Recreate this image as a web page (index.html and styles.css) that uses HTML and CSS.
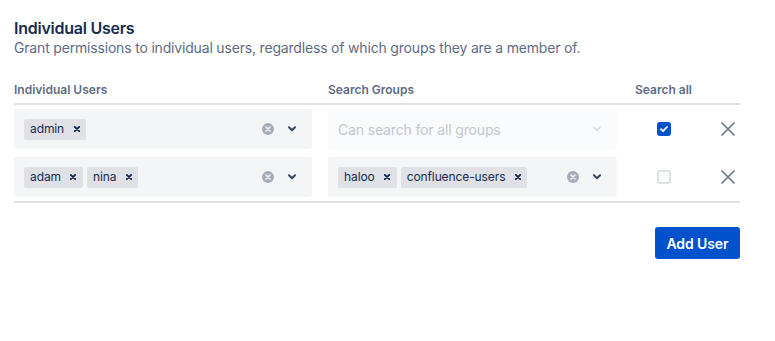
FILE: index.html
```html
<!DOCTYPE html>
<html lang="en">
<head>
<meta charset="utf-8">
<title>Individual Users</title>
<link rel="stylesheet" href="styles.css">
</head>
<body>
<section class="section">
  <h2 class="title">Individual Users</h2>
  <p class="desc">Grant permissions to individual users, regardless of which groups they are a member of.</p>

  <div class="table">
    <div class="row head">
      <div class="th">Individual Users</div>
      <div class="th">Search Groups</div>
      <div class="th">Search all</div>
      <div class="th"></div>
    </div>

    <div class="row body">
      <div class="cell c1">
        <div class="select">
          <div class="values">
            <span class="tag"><span class="tag-label">admin</span><span class="tag-remove"><svg viewBox="0 0 6 6" width="6" height="6"><path d="M0.8 0.8 L5.2 5.2 M5.2 0.8 L0.8 5.2" stroke="#091E42" stroke-width="1.7" stroke-linecap="round"/></svg></span></span>
          </div>
          <div class="indicators">
            <span class="ind"><svg viewBox="0 0 12 12" width="12" height="12"><circle cx="6" cy="6" r="6" fill="#A5ADBA"/><path d="M4 4 L8 8 M8 4 L4 8" stroke="#F4F5F7" stroke-width="1.6" stroke-linecap="round"/></svg></span>
            <span class="ind"><svg viewBox="0 0 10 6" width="10" height="6"><path d="M2 1.3 L5 4.3 L8 1.3" fill="none" stroke="#344563" stroke-width="2" stroke-linecap="round" stroke-linejoin="round"/></svg></span>
          </div>
        </div>
      </div>
      <div class="cell c2">
        <div class="select disabled">
          <div class="values">
            <span class="placeholder">Can search for all groups</span>
          </div>
          <div class="indicators">
            <span class="ind"><svg viewBox="0 0 10 6" width="10" height="6"><path d="M2 1.3 L5 4.3 L8 1.3" fill="none" stroke="#DFE1E6" stroke-width="2" stroke-linecap="round" stroke-linejoin="round"/></svg></span>
          </div>
        </div>
      </div>
      <div class="cell c3">
        <span class="checkbox checked"><svg viewBox="0 0 14 14" width="14" height="14"><path d="M4 7.2 L6.1 9.2 L10 5" fill="none" stroke="#fff" stroke-width="1.8" stroke-linecap="round" stroke-linejoin="round"/></svg></span>
      </div>
      <div class="cell c4">
        <button class="remove" type="button" aria-label="Remove"><svg viewBox="0 0 14 14" width="14" height="14"><path d="M1 1 L13 13 M13 1 L1 13" stroke="#6B778C" stroke-width="1.7" stroke-linecap="round"/></svg></button>
      </div>
    </div>

    <div class="row body last">
      <div class="cell c1">
        <div class="select">
          <div class="values">
            <span class="tag"><span class="tag-label">adam</span><span class="tag-remove"><svg viewBox="0 0 6 6" width="6" height="6"><path d="M0.8 0.8 L5.2 5.2 M5.2 0.8 L0.8 5.2" stroke="#091E42" stroke-width="1.7" stroke-linecap="round"/></svg></span></span>
            <span class="tag"><span class="tag-label">nina</span><span class="tag-remove"><svg viewBox="0 0 6 6" width="6" height="6"><path d="M0.8 0.8 L5.2 5.2 M5.2 0.8 L0.8 5.2" stroke="#091E42" stroke-width="1.7" stroke-linecap="round"/></svg></span></span>
          </div>
          <div class="indicators">
            <span class="ind"><svg viewBox="0 0 12 12" width="12" height="12"><circle cx="6" cy="6" r="6" fill="#A5ADBA"/><path d="M4 4 L8 8 M8 4 L4 8" stroke="#F4F5F7" stroke-width="1.6" stroke-linecap="round"/></svg></span>
            <span class="ind"><svg viewBox="0 0 10 6" width="10" height="6"><path d="M2 1.3 L5 4.3 L8 1.3" fill="none" stroke="#344563" stroke-width="2" stroke-linecap="round" stroke-linejoin="round"/></svg></span>
          </div>
        </div>
      </div>
      <div class="cell c2">
        <div class="select">
          <div class="values">
            <span class="tag"><span class="tag-label">haloo</span><span class="tag-remove"><svg viewBox="0 0 6 6" width="6" height="6"><path d="M0.8 0.8 L5.2 5.2 M5.2 0.8 L0.8 5.2" stroke="#091E42" stroke-width="1.7" stroke-linecap="round"/></svg></span></span>
            <span class="tag"><span class="tag-label">confluence-users</span><span class="tag-remove"><svg viewBox="0 0 6 6" width="6" height="6"><path d="M0.8 0.8 L5.2 5.2 M5.2 0.8 L0.8 5.2" stroke="#091E42" stroke-width="1.7" stroke-linecap="round"/></svg></span></span>
          </div>
          <div class="indicators">
            <span class="ind"><svg viewBox="0 0 12 12" width="12" height="12"><circle cx="6" cy="6" r="6" fill="#A5ADBA"/><path d="M4 4 L8 8 M8 4 L4 8" stroke="#F4F5F7" stroke-width="1.6" stroke-linecap="round"/></svg></span>
            <span class="ind"><svg viewBox="0 0 10 6" width="10" height="6"><path d="M2 1.3 L5 4.3 L8 1.3" fill="none" stroke="#344563" stroke-width="2" stroke-linecap="round" stroke-linejoin="round"/></svg></span>
          </div>
        </div>
      </div>
      <div class="cell c3">
        <span class="checkbox"></span>
      </div>
      <div class="cell c4">
        <button class="remove" type="button" aria-label="Remove"><svg viewBox="0 0 14 14" width="14" height="14"><path d="M1 1 L13 13 M13 1 L1 13" stroke="#6B778C" stroke-width="1.7" stroke-linecap="round"/></svg></button>
      </div>
    </div>
  </div>

  <div class="actions">
    <button class="btn-primary" type="button">Add User</button>
  </div>
</section>
</body>
</html>
```

FILE: styles.css
```css
* { box-sizing: border-box; }

html, body {
  margin: 0;
  background: #fff;
}

body {
  font-family: Inter, "Noto Sans", sans-serif;
  color: #172B4D;
}

.section {
  width: 754px;
  padding: 18px 14px 0;
}

.title {
  margin: 0;
  font-size: 16px;
  line-height: 20px;
  font-weight: 600;
  letter-spacing: -0.25px;
  color: #172B4D;
}

.desc {
  margin: 0;
  font-size: 14px;
  line-height: 20px;
  letter-spacing: -0.18px;
  color: #5E6C84;
}

.table {
  margin-top: 24px;
  border-bottom: 2px solid #DFE1E6;
}

.row {
  display: grid;
  grid-template-columns: 314px 307px 58px 47px;
  align-items: center;
}

.row.head {
  border-bottom: 2px solid #DFE1E6;
}

.th {
  font-size: 12px;
  line-height: 16px;
  font-weight: 600;
  color: #5E6C84;
  padding-bottom: 5px;
  white-space: nowrap;
}

.row.body {
  height: 48px;
}

.c1 { padding-right: 16px; }
.c2 { padding-right: 18px; }
.c3 { display: flex; justify-content: center; }
.c4 { display: flex; justify-content: flex-end; }

.select {
  height: 40px;
  background: #F4F5F7;
  border: 2px solid #F4F5F7;
  border-radius: 3px;
  display: flex;
  align-items: center;
  padding: 0 10px 0 6px;
}

.select.disabled {
  background: #FAFBFC;
  border-color: #FAFBFC;
}

.values {
  flex: 1;
  display: flex;
  align-items: center;
  min-width: 0;
}

.placeholder {
  margin-left: 2px;
  font-size: 14px;
  letter-spacing: -0.15px;
  color: #C1C7D0;
}

.tag {
  display: inline-flex;
  align-items: center;
  height: 21px;
  margin: 0 2px;
  background: #DFE1E6;
  border-radius: 2px;
}

.tag-label {
  font-size: 12px;
  line-height: 14px;
  letter-spacing: -0.1px;
  color: #172B4D;
  padding: 0 3px 0 6px;
}

.tag-remove {
  width: 19px;
  height: 21px;
  display: flex;
  align-items: center;
  justify-content: center;
}

.tag-remove svg { display: block; }

.indicators {
  display: flex;
  align-items: center;
  gap: 8px;
}

.ind {
  width: 16px;
  height: 16px;
  display: flex;
  align-items: center;
  justify-content: center;
}

.ind svg { display: block; }

.checkbox {
  width: 14px;
  height: 14px;
  border-radius: 3px;
  border: 2px solid #DFE1E6;
  background: #FAFBFC;
  display: flex;
  align-items: center;
  justify-content: center;
}

.checkbox.checked {
  background: #0052CC;
  border: 0;
}

.checkbox svg { display: block; }

.remove {
  width: 24px;
  height: 24px;
  padding: 0;
  border: 0;
  background: transparent;
  display: flex;
  align-items: center;
  justify-content: center;
  cursor: pointer;
}

.actions {
  display: flex;
  justify-content: flex-end;
  margin-top: 24px;
}

.btn-primary {
  width: 85px;
  height: 32px;
  border: 0;
  border-radius: 3px;
  background: #0052CC;
  color: #fff;
  font-family: inherit;
  font-size: 14px;
  font-weight: 600;
  letter-spacing: -0.1px;
  padding: 0;
}
```
